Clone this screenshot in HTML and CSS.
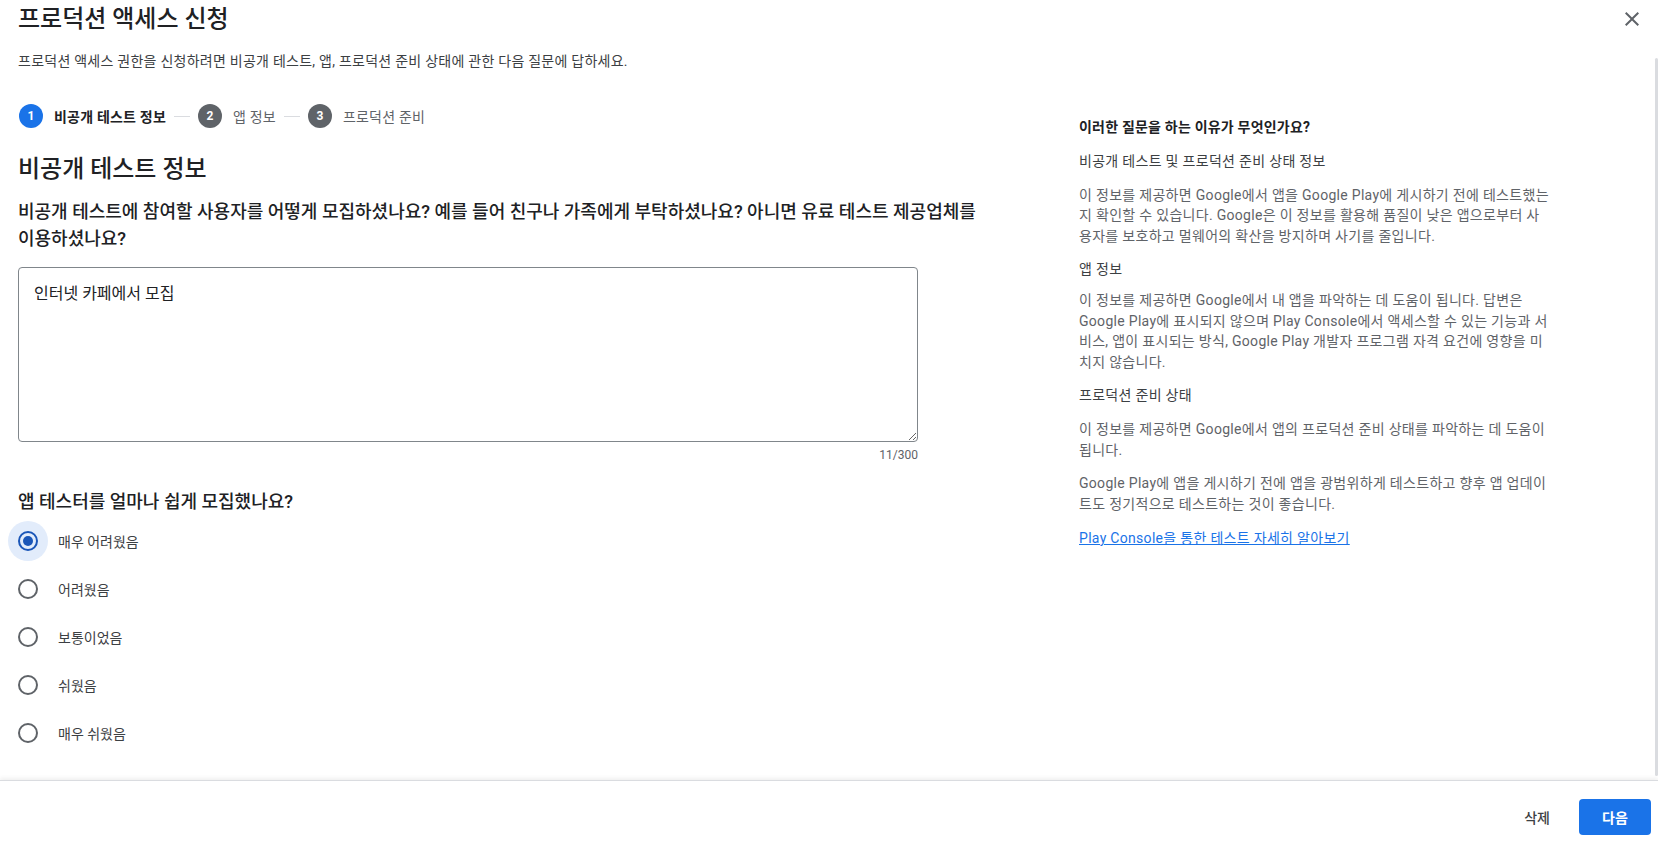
FILE: index.html
```html
<!DOCTYPE html>
<html lang="ko">
<head>
<meta charset="utf-8">
<title>프로덕션 액세스 신청</title>
<link rel="stylesheet" href="styles.css">
</head>
<body>
<div class="dialog">
  <header class="head">
    <h1 class="title">프로덕션 액세스 신청</h1>
    <button class="close" aria-label="닫기">
      <svg viewBox="0 0 24 24" width="24" height="24"><path d="M19 6.41L17.59 5 12 10.59 6.41 5 5 6.41 10.59 12 5 17.59 6.41 19 12 13.41 17.59 19 19 17.59 13.41 12z" fill="#5f6368"/></svg>
    </button>
  </header>
  <div class="scroll">
    <p class="intro">프로덕션 액세스 권한을 신청하려면 비공개 테스트, 앱, 프로덕션 준비 상태에 관한 다음 질문에 답하세요.</p>
    <div class="cols">
      <main class="left">
        <div class="steps">
          <div class="step active"><span class="num">1</span><span class="label">비공개 테스트 정보</span></div>
          <span class="sep"></span>
          <div class="step"><span class="num">2</span><span class="label">앱 정보</span></div>
          <span class="sep"></span>
          <div class="step"><span class="num">3</span><span class="label">프로덕션 준비</span></div>
        </div>
        <h2 class="section">비공개 테스트 정보</h2>
        <h3 class="question">비공개 테스트에 참여할 사용자를 어떻게 모집하셨나요? 예를 들어 친구나 가족에게 부탁하셨나요? 아니면 유료 테스트 제공업체를 이용하셨나요?</h3>
        <div class="field">
          <textarea class="answer">인터넷 카페에서 모집</textarea>
          <div class="counter">11/300</div>
        </div>
        <h3 class="question q2">앱 테스터를 얼마나 쉽게 모집했나요?</h3>
        <div class="radios">
          <label class="radio checked"><span class="halo"><span class="ring"><span class="dot"></span></span></span><span class="rlabel">매우 어려웠음</span></label>
          <label class="radio"><span class="halo"><span class="ring"></span></span><span class="rlabel">어려웠음</span></label>
          <label class="radio"><span class="halo"><span class="ring"></span></span><span class="rlabel">보통이었음</span></label>
          <label class="radio"><span class="halo"><span class="ring"></span></span><span class="rlabel">쉬웠음</span></label>
          <label class="radio"><span class="halo"><span class="ring"></span></span><span class="rlabel">매우 쉬웠음</span></label>
        </div>
      </main>
      <aside class="help">
        <h4 class="help-title">이러한 질문을 하는 이유가 무엇인가요?</h4>
        <p class="help-sub">비공개 테스트 및 프로덕션 준비 상태 정보</p>
        <p class="help-text">이 정보를 제공하면 Google에서 앱을 Google Play에 게시하기 전에 테스트했는지 확인할 수 있습니다. Google은 이 정보를 활용해 품질이 낮은 앱으로부터 사용자를 보호하고 멀웨어의 확산을 방지하며 사기를 줄입니다.</p>
        <p class="help-sub">앱 정보</p>
        <p class="help-text tight">이 정보를 제공하면 Google에서 내 앱을 파악하는 데 도움이 됩니다. 답변은 Google Play에 표시되지 않으며 Play Console에서 액세스할 수 있는 기능과 서비스, 앱이 표시되는 방식, Google Play 개발자 프로그램 자격 요건에 영향을 미치지 않습니다.</p>
        <p class="help-sub">프로덕션 준비 상태</p>
        <p class="help-text">이 정보를 제공하면 Google에서 앱의 프로덕션 준비 상태를 파악하는 데 도움이 됩니다.</p>
        <p class="help-text">Google Play에 앱을 게시하기 전에 앱을 광범위하게 테스트하고 향후 앱 업데이트도 정기적으로 테스트하는 것이 좋습니다.</p>
        <p class="help-text"><a class="help-link" href="#">Play Console을 통한 테스트 자세히 알아보기</a></p>
      </aside>
    </div>
  </div>
  <footer class="foot">
    <button class="btn-text">삭제</button>
    <button class="btn-primary">다음</button>
  </footer>
  <div class="scrollbar"></div>
</div>
</body>
</html>
```
FILE: styles.css
```css
* { box-sizing: border-box; }
html, body { margin: 0; padding: 0; height: 100%; background: #fff; }
body {
  font-family: Roboto, "Noto Sans CJK KR", sans-serif;
  color: #202124;
  overflow: hidden;
}
.dialog {
  position: relative;
  height: 842px;
  display: flex;
  flex-direction: column;
}
.head {
  height: 38px;
  flex: none;
  display: flex;
  align-items: center;
  justify-content: space-between;
  padding: 0 14px 0 18px;
}
.title {
  margin: 0;
  font-size: 24px;
  line-height: 36px;
  font-weight: 500;
  color: #202124;
}
.close {
  border: 0;
  background: none;
  padding: 0;
  width: 24px;
  height: 24px;
  display: flex;
}
.scroll {
  flex: 1;
  overflow: hidden;
  padding: 0 0 28px 18px;
}
.scrollbar {
  position: absolute;
  right: 0;
  top: 58px;
  bottom: 66px;
  width: 3px;
  border-radius: 2px;
  background: #dadce0;
}
.intro {
  margin: 13px 0 0;
  font-size: 14px;
  line-height: 20px;
  letter-spacing: 0.25px;
  color: #3c4043;
}
.cols {
  display: flex;
  margin-top: 33px;
}
.left {
  width: 970px;
  flex: none;
}
.steps {
  display: flex;
  align-items: center;
  height: 24px;
  padding-left: 1px;
}
.step {
  display: flex;
  align-items: center;
  gap: 11px;
  font-size: 14px;
  letter-spacing: 0.2px;
  color: #5f6368;
}
.step .num {
  width: 24px;
  height: 24px;
  border-radius: 50%;
  background: #5f6368;
  color: #fff;
  font-size: 12px;
  font-weight: 700;
  letter-spacing: 0;
  display: flex;
  align-items: center;
  justify-content: center;
}
.step.active .num { background: #1a73e8; }
.step.active .label { color: #202124; font-weight: 700; }
.sep {
  width: 16px;
  height: 1px;
  background: #dadce0;
  margin: 0 8px;
}
.section {
  margin: 25px 0 0;
  font-size: 24px;
  line-height: 32px;
  font-weight: 500;
  color: #202124;
}
.question {
  margin: 13px 0 0;
  font-size: 18px;
  line-height: 27px;
  font-weight: 500;
  color: #202124;
}
.field {
  width: 900px;
  margin-top: 15px;
}
.answer {
  display: block;
  width: 900px;
  height: 175px;
  border: 1px solid #80868b;
  border-radius: 4px;
  padding: 16px 15px;
  font-family: Roboto, "Noto Sans CJK KR", sans-serif;
  font-size: 16px;
  line-height: 20px;
  color: #202124;
  resize: both;
  outline: none;
}
.counter {
  margin-top: 5px;
  text-align: right;
  font-size: 12px;
  line-height: 16px;
  color: #5f6368;
}
.q2 { margin-top: 25px; }
.radios {
  margin-top: 2px;
  display: flex;
  flex-direction: column;
}
.radio {
  height: 48px;
  display: flex;
  align-items: center;
  gap: 10px;
  margin-left: -10px;
}
.halo {
  width: 40px;
  height: 40px;
  border-radius: 50%;
  display: flex;
  align-items: center;
  justify-content: center;
}
.ring {
  width: 20px;
  height: 20px;
  border-radius: 50%;
  border: 2px solid #5f6368;
  display: flex;
  align-items: center;
  justify-content: center;
}
.radio.checked .halo { background: #e2ecfb; }
.radio.checked .ring { border-color: #1a56b8; }
.dot {
  width: 10px;
  height: 10px;
  border-radius: 50%;
  background: #1a56b8;
}
.rlabel {
  font-size: 14px;
  color: #3c4043;
}
.help {
  margin-left: 91px;
  width: 472px;
  padding-top: 13px;
  font-size: 14px;
  line-height: 20.5px;
  letter-spacing: 0.3px;
}
.help-title {
  margin: 0;
  font-size: 14px;
  font-weight: 700;
  letter-spacing: 0.2px;
  color: #202124;
}
.help-sub {
  margin: 13.3px 0 0;
  color: #3c4043;
}
.help-text {
  margin: 13.3px 0 0;
  color: #5f6368;
}
.help-text.tight { margin-top: 10.2px; }
.help-link {
  color: #1a73e8;
  text-decoration: underline;
}
.foot {
  height: 62px;
  flex: none;
  border-top: 1px solid #dadce0;
  box-shadow: 0 -2px 4px rgba(60, 64, 67, 0.08);
  display: flex;
  justify-content: flex-end;
  align-items: flex-start;
  gap: 9px;
  padding: 18px 7px 0 0;
}
.btn-text {
  height: 36px;
  padding: 0 20px;
  border: 0;
  background: none;
  font-family: Roboto, "Noto Sans CJK KR", sans-serif;
  font-size: 14px;
  font-weight: 500;
  color: #3c4043;
}
.btn-primary {
  width: 72px;
  height: 36px;
  border: 0;
  border-radius: 4px;
  background: #1a73e8;
  color: #fff;
  font-family: Roboto, "Noto Sans CJK KR", sans-serif;
  font-size: 14px;
  font-weight: 700;
}
```
